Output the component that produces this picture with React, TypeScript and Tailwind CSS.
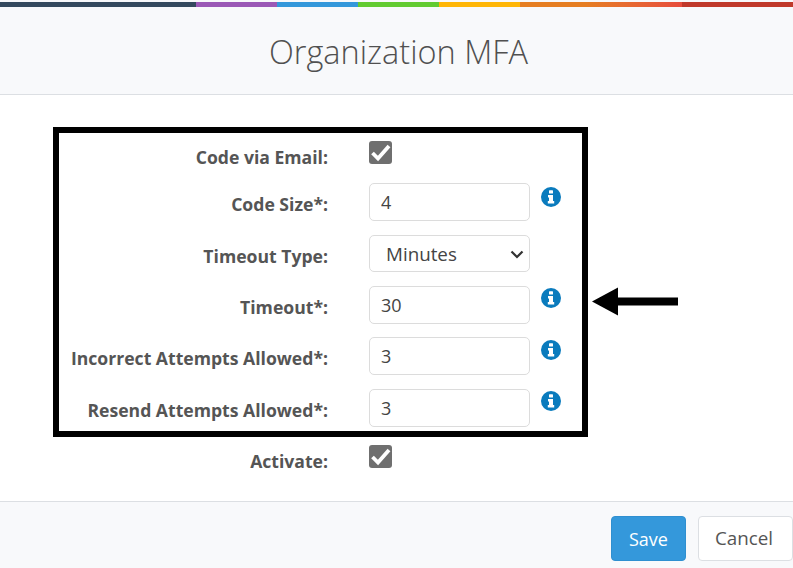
const stripes = [
  { w: 'w-[196px]', c: 'bg-[#34495e]' },
  { w: 'w-[81px]', c: 'bg-[#9b59b6]' },
  { w: 'w-[81px]', c: 'bg-[#3498db]' },
  { w: 'w-[81px]', c: 'bg-[#62cb31]' },
  { w: 'w-[81px]', c: 'bg-[#ffb606]' },
  { w: 'w-[162px]', c: 'bg-gradient-to-r from-[#e67e22] from-40% to-[#e74c3c]' },
  { w: 'flex-1', c: 'bg-[#c0392b]' },
];

function InfoIcon({ className }: { className: string }) {
  return (
    <svg width="20" height="20" viewBox="0 0 20 20" className={`shrink-0 ${className}`}>
      <circle cx="10" cy="10" r="10" fill="#0a7bbd" />
      <rect x="8" y="3.2" width="4" height="3.4" rx="0.6" fill="#fff" />
      <path d="M7 8 H12 V14 H13.2 V16.6 H6.8 V14 H8 V10.4 H7 Z" fill="#fff" />
    </svg>
  );
}

function Checkbox({ className }: { className: string }) {
  return (
    <div className={`flex h-[23px] w-[23px] items-center justify-center rounded-[3px] bg-[#6f6f6f] ${className}`}>
      <svg width="21" height="21" viewBox="0 0 21 21">
        <path d="M2.5 11 L8 16.5 L19 4" fill="none" stroke="#fff" strokeWidth="3.8" />
      </svg>
    </div>
  );
}

function Label({ text, className = 'pt-[9px]' }: { text: string; className?: string }) {
  return <div className={`w-[328px] shrink-0 text-right text-[17.6px] leading-6 font-bold whitespace-nowrap text-[#555] ${className}`}>{text}</div>;
}

function InputRow({ label, value, iconTop = 'mt-[2px]' }: { label: string; value: string; iconTop?: string }) {
  return (
    <div className="flex h-[51.33px] items-start">
      <Label text={label} />
      <input
        readOnly
        value={value}
        className="ml-[41px] h-[38px] w-[161px] rounded-[5px] border border-[#dcdcdc] bg-white px-[11px] text-lg text-[#444] outline-none"
      />
      <InfoIcon className={`ml-[11px] ${iconTop}`} />
    </div>
  );
}

export default function App() {
  return (
    <div className="relative h-[568px] w-[793px] overflow-hidden bg-white font-['Open_Sans',sans-serif]">
      {/* Header */}
      <div className="h-[95px] border-b border-[#dcdfe3] bg-[#f8f9fb] pt-[2px]">
        <div className="flex h-[5px]">
          {stripes.map((s, i) => (
            <div key={i} className={`${s.w} ${s.c}`} />
          ))}
        </div>
        <h1 className="mt-[25px] pl-1 text-center text-[32.5px] leading-[40px] font-light text-[#505050]">Organization MFA</h1>
      </div>

      {/* Form */}
      <div className="h-[407px] border-b border-[#dcdfe3] pt-[37px]">
        <div className="flex h-[51.33px] items-start">
          <Label text="Code via Email:" className="pt-[13px]" />
          <Checkbox className="mt-[9px] ml-[41px]" />
        </div>
        <InputRow label="Code Size*:" value="4" iconTop="mt-[4px]" />
        <div className="flex h-[51.33px] items-start">
          <Label text="Timeout Type:" />
          <div className="relative ml-[41px] h-[37px] w-[161px]">
            <select
              defaultValue="Minutes"
              className="h-full w-full appearance-none rounded-[5px] border border-[#dcdcdc] bg-white pt-[2px] pl-4 text-[18.8px] text-[#444] outline-none"
            >
              <option>Minutes</option>
            </select>
            <svg className="pointer-events-none absolute top-[15px] left-[141px]" width="14" height="9" viewBox="0 0 14 9">
              <path d="M1.5 1.5 L7 7 L12.5 1.5" fill="none" stroke="#333" strokeWidth="2.2" />
            </svg>
          </div>
        </div>
        <InputRow label="Timeout*:" value="30" />
        <InputRow label="Incorrect Attempts Allowed*:" value="3" iconTop="mt-[3px]" />
        <InputRow label="Resend Attempts Allowed*:" value="3" />
        <div className="flex h-[51.33px] items-start">
          <Label text="Activate:" />
          <Checkbox className="mt-[5px] ml-[41px]" />
        </div>
      </div>

      {/* Footer */}
      <div className="flex h-[66px] items-start justify-end gap-3 bg-[#f8f9fb] pt-[14px]">
        <button className="h-[45px] w-[75px] rounded-[4px] border border-[#2f8fd0] bg-[#3498db] text-lg font-medium text-white">Save</button>
        <button className="h-[45px] w-[95px] rounded-[4px] border border-[#dcdfe3] bg-white pr-[3px] text-[18.8px] text-[#555]">Cancel</button>
      </div>

      {/* Annotation over the screenshot */}
      <div className="absolute top-[127px] left-[53px] h-[310px] w-[535px] border-[6px] border-black" />
      <svg className="absolute top-[287px] left-[590px]" width="90" height="30" viewBox="0 0 90 30">
        <path d="M2 14.5 L28 0.5 V10.5 H88 V18.5 H28 V28.5 Z" fill="#000" />
      </svg>
    </div>
  );
}
